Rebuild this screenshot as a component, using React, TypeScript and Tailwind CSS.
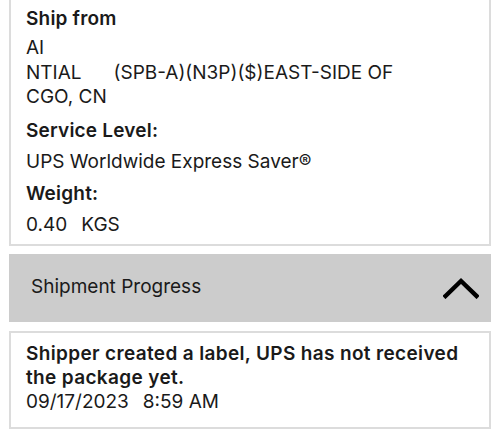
import React from 'react'

function ChevronUp() {
  return (
    <svg width="36" height="22" viewBox="0 0 36 22" fill="none">
      <path d="M2.5 19 L18 4 L33.5 19" stroke="#000" strokeWidth="4.4" strokeLinecap="square" />
    </svg>
  )
}

export default function App() {
  return (
    <div
      className="w-[500px] h-[440px] bg-white overflow-hidden text-[#1a1a1a]"
      style={{ fontFamily: 'Inter, "Liberation Sans", sans-serif' }}
    >
      <div className="mx-[9px] border-2 border-t-0 border-[#dcdcdc] px-[15px] pt-[4px] pb-[3px] text-[19px]">
        <div className="font-semibold tracking-[0.2px] leading-[30px]">Ship from</div>
        <div className="leading-[24.5px] pt-[2px]">
          <div>AI</div>
          <div>
            NTIAL<span className="inline-block w-[32px]" />(SPB-A)(N3P)($)EAST-SIDE OF
          </div>
          <div>CGO, CN</div>
        </div>
        <div className="font-semibold tracking-[0.2px] leading-[31px] pt-[5px]">Service Level:</div>
        <div className="leading-[32px]">UPS Worldwide Express Saver®</div>
        <div className="font-semibold tracking-[0.2px] leading-[31px]">Weight:</div>
        <div className="leading-[32px]">
          0.40<span className="inline-block w-[14px]" />KGS
        </div>
      </div>

      <div className="mx-[9px] mt-[8px] h-[68px] bg-[#cccccc] flex items-center justify-between pl-[22px] pr-[12px]">
        <span className="text-[19px]">Shipment Progress</span>
        <ChevronUp />
      </div>

      <div className="mx-[9px] mt-[9px] border-2 border-[#dcdcdc] px-[15px] pt-[9px] pb-[13px] text-[19px] leading-[24px]">
        <div className="font-semibold tracking-[0.35px]">Shipper created a label, UPS has not received the package yet.</div>
        <div>
          09/17/2023<span className="inline-block w-[14px]" />8:59 AM
        </div>
      </div>
    </div>
  )
}
